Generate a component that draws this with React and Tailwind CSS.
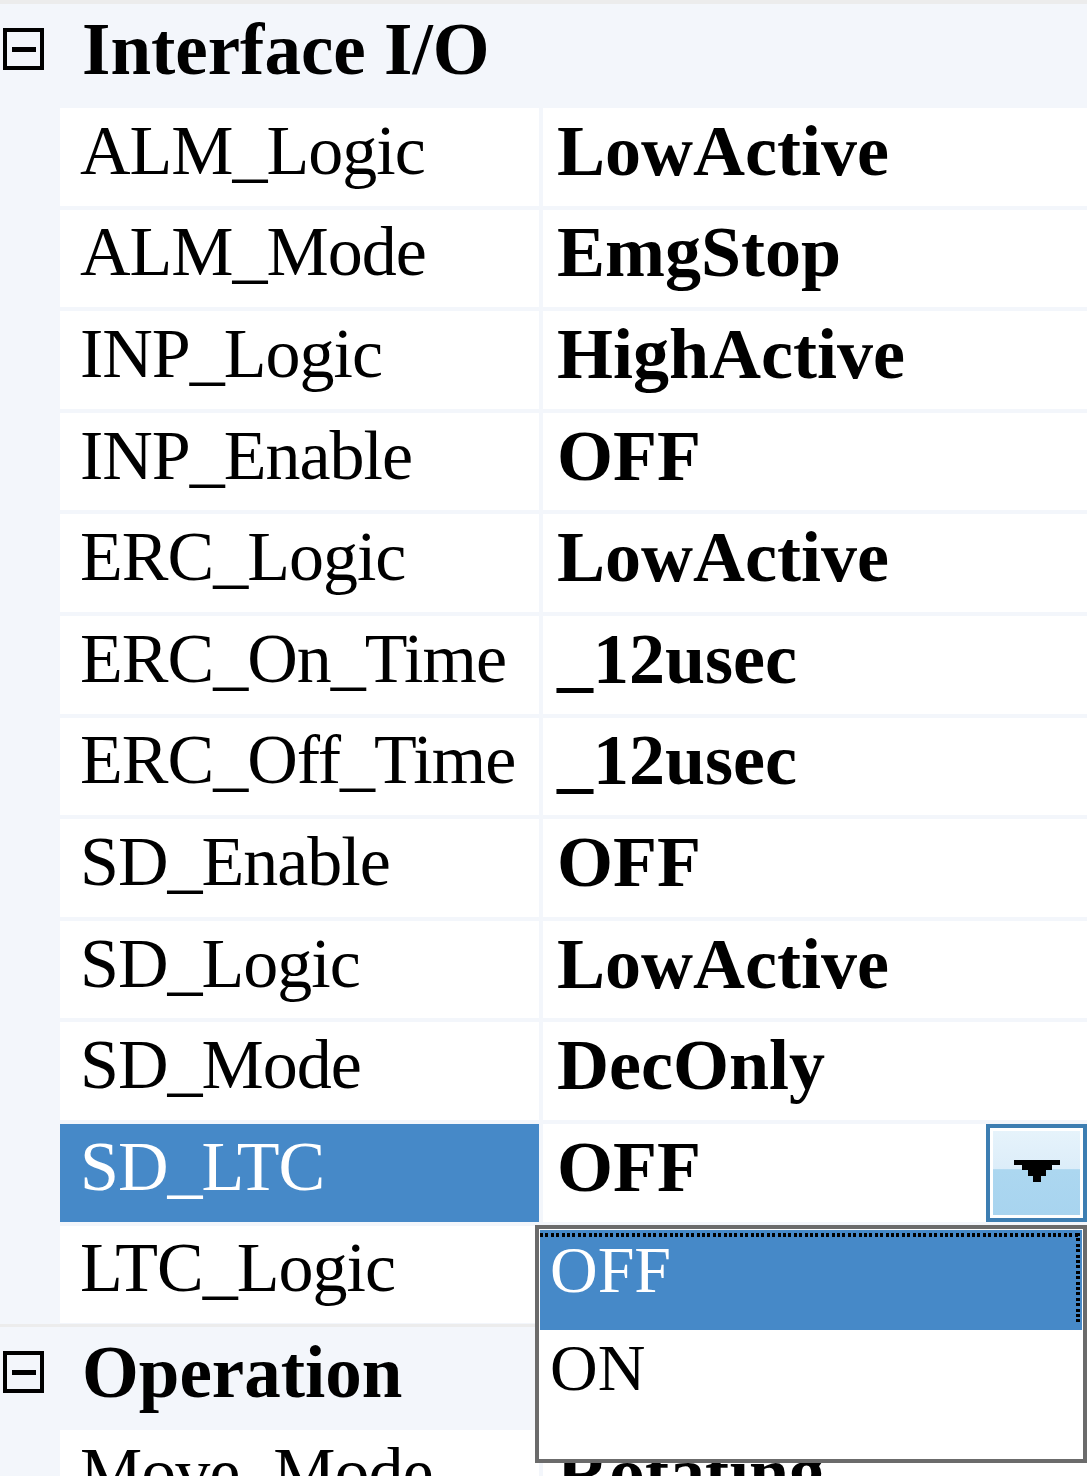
const interfaceRows = [
  ["ALM_Logic", "LowActive"],
  ["ALM_Mode", "EmgStop"],
  ["INP_Logic", "HighActive"],
  ["INP_Enable", "OFF"],
  ["ERC_Logic", "LowActive"],
  ["ERC_On_Time", "_12usec"],
  ["ERC_Off_Time", "_12usec"],
  ["SD_Enable", "OFF"],
  ["SD_Logic", "LowActive"],
  ["SD_Mode", "DecOnly"],
];

const Category = ({ title }) => (
  <div className="flex h-[100px] items-center pb-[10px]">
    <div className="flex w-[60px] pl-[3px]">
      <div className="flex h-[42px] w-[41px] items-center justify-center border-[4px] border-black">
        <div className="h-[5px] w-[24px] bg-black" />
      </div>
    </div>
    <span className="pl-[22px] text-[73px] font-bold leading-none">{title}</span>
  </div>
);

const Row = ({ name, value, selected, children }) => (
  <div className="flex h-[97.6px] gap-[4px]">
    <div
      className={
        selected
          ? "flex w-[479px] items-center bg-[#4689c8] pb-[12px] pl-[20px] text-[70px] leading-none tracking-[-1px] text-white"
          : "flex w-[479px] items-center bg-white pb-[12px] pl-[20px] text-[70px] leading-none tracking-[-1px]"
      }
    >
      {name}
    </div>
    <div className="relative flex flex-1 items-center justify-between bg-white pl-[14px]">
      <span className="pb-[12px] text-[72px] font-bold leading-none">{value}</span>
      {children}
    </div>
  </div>
);

const DropButton = () => (
  <div className="h-full w-[101px] border-[4px] border-[#3d7eb2] p-[3px]">
    <div className="flex h-full w-full items-center justify-center bg-[linear-gradient(#e6f3fb_0%,#dcedf9_45%,#acd7f0_46%,#a8d4ef_100%)]">
      <svg width="46" height="26" viewBox="0 0 46 26">
        <polygon points="0,0 46,0 46,5 38,5 38,10 32,10 32,16 27,16 27,22 19,22 19,16 14,16 14,10 8,10 8,5 0,5" fill="#000" />
      </svg>
    </div>
  </div>
);

const DropList = () => (
  <div className="absolute left-[-8px] right-0 top-[calc(100%+3px)] z-10 h-[238px] border-[4px] border-[#6b6b6b] bg-white p-[1px] font-normal">
    <div className="relative flex h-[100px] items-center bg-[#4689c8] pb-[20px] pl-[10px] pr-[6px] text-[66px] leading-none text-white">
      OFF
      <div className="absolute left-0 right-[2px] top-[3px] h-[4px] bg-[repeating-linear-gradient(90deg,#000_0_3px,transparent_3px_5.4px)]" />
      <div className="absolute bottom-[6px] right-[2px] top-[3px] w-[4px] bg-[repeating-linear-gradient(180deg,#000_0_3px,transparent_3px_5.4px)]" />
    </div>
    <div className="flex h-[100px] items-center pb-[24px] pl-[10px] text-[66px] leading-none">ON</div>
  </div>
);

export default function App() {
  return (
    <div className="h-[1476px] w-[1091px] overflow-hidden bg-white font-['Liberation_Serif',serif] text-black">
      <div className="w-[1087px] border-t-[4px] border-[#ececec] bg-[#f3f6fb]">
        <Category title="Interface I/O" />
        <div className="flex flex-col gap-[4px] pl-[60px] pt-[4px]">
          {interfaceRows.map(([n, v]) => (
            <Row key={n} name={n} value={v} />
          ))}
          <Row name="SD_LTC" value="OFF" selected>
            <DropButton />
            <DropList />
          </Row>
          <Row name="LTC_Logic" value="" />
        </div>
        <div className="mt-[1px] h-[3px] bg-[#ececec]" />
        <Category title="Operation" />
        <div className="flex flex-col gap-[4px] pl-[60px] pt-[3px]">
          <Row name="Move_Mode" value="Rotating" />
        </div>
      </div>
    </div>
  );
}
